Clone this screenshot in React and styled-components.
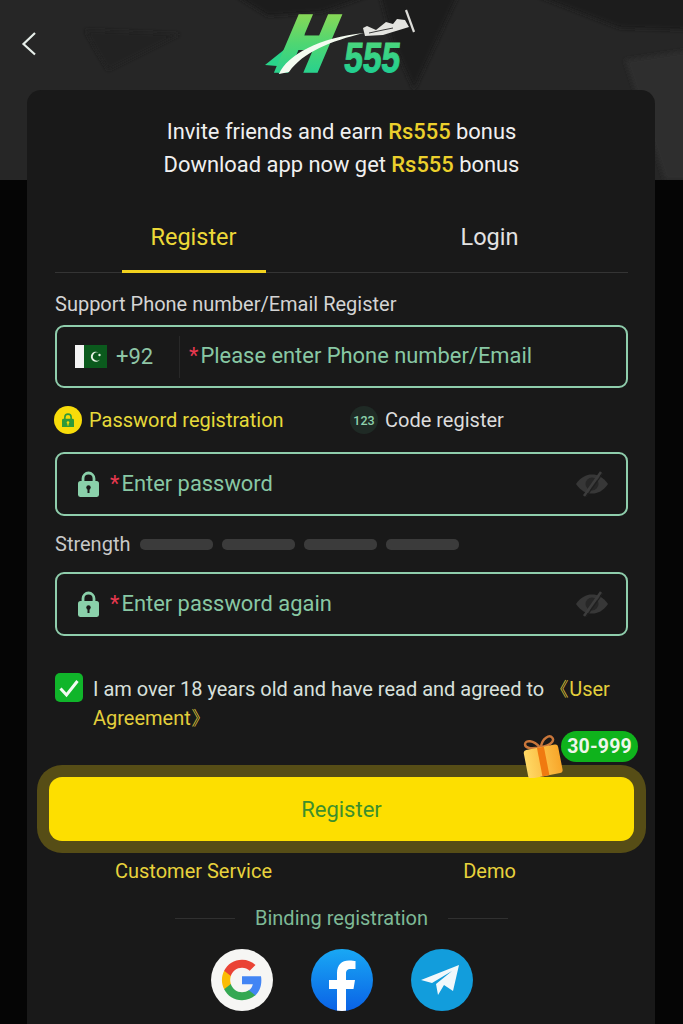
import React from "react";
import styled, { createGlobalStyle } from "styled-components";

const Global = createGlobalStyle`
  html, body { margin: 0; padding: 0; background: #050505; }
  * { box-sizing: border-box; }
`;

const Page = styled.div`
  position: relative;
  width: 683px;
  height: 1024px;
  overflow: hidden;
  background: #050505;
  font-family: Roboto, "Liberation Sans", sans-serif;
  color: #e8e8e8;
`;

const Backdrop = styled.svg`
  position: absolute;
  top: 0;
  left: 0;
  width: 683px;
  height: 180px;
`;

const Header = styled.header`
  position: relative;
  height: 90px;
  display: grid;
  grid-template-columns: 1fr auto 1fr;
  align-items: start;
  padding: 10px 24px 0 20px;
`;

const BackButton = styled.button`
  width: 20px;
  height: 28px;
  margin-top: 20px;
  padding: 0;
  border: 0;
  background: none;
  display: flex;
`;

const Card = styled.main`
  position: relative;
  width: 628px;
  height: 934px;
  margin-left: 27px;
  padding: 25px 27px 0 28px;
  background: #191919;
  border-radius: 14px 14px 0 0;
`;

const Promo = styled.p`
  margin: 0;
  font-size: 21.9px;
  line-height: 33px;
  text-align: center;
  color: #f0f0f0;
`;

const Amount = styled.b`
  font-weight: 500;
  color: #ecd02c;
`;

const TwoColumns = styled.div`
  display: grid;
  grid-template-columns: 144px 144px;
  column-gap: 152px;
  justify-content: center;
`;

const Tabs = styled(TwoColumns)`
  height: 63px;
  margin-top: 29px;
  box-shadow: inset 0 -1px 0 #343434;
`;

const Tab = styled.div`
  display: flex;
  align-items: center;
  justify-content: center;
  padding-bottom: 7px;
  font-size: 23.5px;
  color: ${(p) => (p.$active ? "#ecd838" : "#e2e2e2")};
  border-bottom: 3px solid ${(p) => (p.$active ? "#f2d21e" : "transparent")};
`;

const FieldLabel = styled.div`
  height: 24px;
  margin-top: 19px;
  font-size: 20px;
  line-height: 24px;
  color: #d4d4d4;
`;

const Field = styled.div`
  height: ${(p) => p.$height}px;
  margin-top: ${(p) => p.$top}px;
  display: flex;
  align-items: center;
  padding: 0 17px 0 ${(p) => p.$left}px;
  border: 2px solid #8fcdac;
  border-radius: 9px;
`;

const Flag = styled.svg`
  width: 32px;
  height: 23px;
  flex: none;
`;

const Dial = styled.span`
  width: 64px;
  height: 42px;
  margin-left: 9px;
  display: flex;
  align-items: center;
  font-size: 22px;
  color: #8fc6a6;
  border-right: 1px solid #282828;
`;

const Placeholder = styled.span`
  margin-left: ${(p) => p.$gap}px;
  margin-bottom: 2px;
  font-size: 21.9px;
  color: #88c8a4;
  white-space: nowrap;
`;

const Star = styled.i`
  font-style: normal;
  padding-right: 2px;
  color: #e8384f;
`;

const EyeIcon = styled.svg`
  width: 34px;
  height: 28px;
  margin-left: auto;
  flex: none;
`;

const Methods = styled.div`
  height: 28px;
  margin-top: 18px;
  margin-left: -1px;
  display: grid;
  grid-template-columns: 296px auto;
`;

const Method = styled.div`
  display: flex;
  align-items: center;
  gap: 7px;
  font-size: 20px;
  color: ${(p) => (p.$active ? "#e6da3a" : "#dcdcdc")};
`;

const MethodBadge = styled.span`
  width: 28px;
  height: 28px;
  display: flex;
  align-items: center;
  justify-content: center;
  border-radius: 50%;
  font-size: 12.5px;
  font-weight: 500;
  color: #8fd2ad;
  background: ${(p) => (p.$active ? "#f8dc0a" : "#1f2a25")};
`;

const Strength = styled.div`
  height: 22px;
  margin-top: 17px;
  display: flex;
  align-items: center;
  font-size: 20px;
  color: #c8c8c8;
`;

const StrengthBars = styled.div`
  display: flex;
  gap: 9.5px;
  margin-left: 10px;
`;

const StrengthBar = styled.span`
  width: 72.5px;
  height: 11px;
  border-radius: 5px;
  background: #3b3b3b;
`;

const Agreement = styled.div`
  margin-top: 37px;
  display: flex;
  gap: 10px;
`;

const CheckBox = styled.span`
  width: 28px;
  height: 29px;
  flex: none;
  display: flex;
  align-items: center;
  justify-content: center;
  border-radius: 5px;
  background: #10b52a;
`;

const AgreementText = styled.p`
  margin: 2px 0 0;
  font-size: 20px;
  line-height: 29px;
  color: #d8e0dc;
`;

const AgreementLink = styled.span`
  color: #e3cf3c;
`;

const SubmitWrap = styled.div`
  position: relative;
  margin: 44px 0 0 -6px;
  width: 585px;
`;

const SubmitButton = styled.button`
  display: block;
  width: 100%;
  height: 64px;
  border: 0;
  border-radius: 13px;
  background: #fddf00;
  box-shadow: 0 0 0 12px #564d16;
  font-family: inherit;
  font-size: 22px;
  color: #3d8f2c;
`;

const Reward = styled.div`
  position: absolute;
  top: -46px;
  right: -4px;
  height: 31px;
  padding: 0 6px;
  display: flex;
  align-items: center;
  border-radius: 16px;
  background: #0fb31c;
  font-size: 19.5px;
  font-weight: 700;
  letter-spacing: 0.2px;
  color: #eef6ea;
`;

const GiftIcon = styled.svg`
  position: absolute;
  top: -43px;
  right: 69px;
  width: 44px;
  height: 44px;
`;

const Links = styled(TwoColumns)`
  margin-top: 18px;
  height: 24px;
  align-items: center;
`;

const LinkText = styled.a`
  justify-self: center;
  white-space: nowrap;
  font-size: 20px;
  color: #e8d23c;
`;

const Divider = styled.div`
  height: 24px;
  margin-top: 23px;
  display: flex;
  align-items: center;
  justify-content: center;
  gap: 20px;
  font-size: 20px;
  color: #7eb996;
  &::before,
  &::after {
    content: "";
    width: 60px;
    height: 1px;
    background: #303030;
  }
`;

const Socials = styled.div`
  margin-top: 19px;
  display: flex;
  justify-content: center;
  gap: 38px;
`;

const SocialIcon = styled.svg`
  width: 62px;
  height: 62px;
  flex: none;
`;

const LockGlyph = ({ size = 21, color = "#8ad0aa", hole = "#191919" }) => (
  <svg width={size} height={size * 1.24} viewBox="0 0 21 26" style={{ flex: "none" }}>
    <path d="M5 11V7.500a5.500 5.500 0 0 1 11 0V11" fill="none" stroke={color} strokeWidth="2.800" />
    <rect x="0" y="10" width="21" height="16" rx="2.500" fill={color} />
    <circle cx="10.500" cy="16.500" r="2.200" fill={hole} />
    <rect x="9.500" y="17" width="2" height="5" fill={hole} />
  </svg>
);

const HiddenEye = () => (
  <EyeIcon viewBox="0 0 34 28">
    <path
      fill="#373737"
      d="M1 14C6 7 11 4.500 17 4.500S28 7 33 14c-5 7-10 9.500-16 9.500S6 21 1 14Z"
    />
    <circle cx="17" cy="14" r="6.500" fill="#272727" />
    <path d="M9 26 26 2" stroke="#3c3c3c" strokeWidth="2.600" />
    <path d="M11 27 28 3" stroke="#1f1f1f" strokeWidth="1.200" />
  </EyeIcon>
);

const Logo = () => (
  <svg width="150" height="66" viewBox="0 0 150 66" overflow="visible">
    <defs>
      <linearGradient id="logoGreen" x1="0" y1="0" x2="0" y2="1">
        <stop offset="0" stopColor="#a2d94a" />
        <stop offset="0.5" stopColor="#4fd672" />
        <stop offset="1" stopColor="#17cf9a" />
      </linearGradient>
      <linearGradient id="digitGreen" x1="0" y1="0" x2="0" y2="1">
        <stop offset="0" stopColor="#55d877" />
        <stop offset="1" stopColor="#16cc96" />
      </linearGradient>
    </defs>
    <path d="M0 55 20 39 40 24 26 58 14 64 12 56Z" fill="#2ad48a" />
    <text
      x="0"
      y="0"
      transform="translate(8 60) skewX(-23) scale(.86 1)"
      fontFamily="'Liberation Sans', sans-serif"
      fontWeight="700"
      fontSize="77"
      fill="url(#logoGreen)"
      stroke="url(#logoGreen)"
      strokeWidth="5.500"
    >
      H
    </text>
    <text
      x="0"
      y="0"
      transform="translate(78 62) skewX(-6) scale(.8 1)"
      fontFamily="'Liberation Sans', sans-serif"
      fontWeight="700"
      fontSize="42"
      fill="url(#digitGreen)"
      stroke="url(#digitGreen)"
      strokeWidth="1"
    >
      555
    </text>
    <path d="M14 64C22 45 55 27 99 23 66 31 38 42 24 62Z" fill="#f4fbf0" />
    <path
      d="M98 18 100 26 118 25 131 21 144 17 140 10 132 9 128 14 121 12 111 20 102 16Z"
      fill="#e4e4e0"
    />
    <path d="M104 23 118 20 128 18" stroke="#3a3a3a" strokeWidth="1" fill="none" />
    <path d="M141 0 149 22" stroke="#dcdcd8" strokeWidth="2.200" />
  </svg>
);

export default function App() {
  return (
    <Page>
      <Global />
      <Backdrop viewBox="0 0 683 180" preserveAspectRatio="none">
        <defs>
          <filter id="softEdge">
            <feGaussianBlur stdDeviation="2" />
          </filter>
        </defs>
        <rect width="683" height="180" fill="#262626" />
        <g filter="url(#softEdge)">
          <path d="M235 -5 268 16 322 12 370 -5Z" fill="#1c1c1c" />
          <path d="M85 30 180 34 108 70 96 50Z" fill="#202020" />
          <path d="M380 -5 458 -5 414 90 392 40Z" fill="#1e1e1e" />
          <path d="M535 -5 690 -5 690 30 620 28Z" fill="#1f1f1f" />
          <path d="M625 60 690 50 690 180 665 180Z" fill="#2d2d2d" />
        </g>
      </Backdrop>
      <Header>
        <BackButton aria-label="Back">
          <svg width="20" height="28" viewBox="0 0 20 28" fill="none">
            <path d="M15 3 3.500 14 15 24.500" stroke="#e6eee9" strokeWidth="2.200" />
          </svg>
        </BackButton>
        <Logo />
      </Header>
      <Card>
        <Promo>
          Invite friends and earn <Amount>Rs555</Amount> bonus
          <br />
          Download app now get <Amount>Rs555</Amount> bonus
        </Promo>
        <Tabs>
          <Tab $active>Register</Tab>
          <Tab>Login</Tab>
        </Tabs>
        <FieldLabel>Support Phone number/Email Register</FieldLabel>
        <Field $height={63} $top={9} $left={18}>
          <Flag viewBox="0 0 32 23">
            <rect width="32" height="23" fill="#0b5a1d" />
            <rect width="9" height="23" fill="#f4f4f4" />
            <path d="M23.500 7.500a5 5 0 1 0 1.500 7 4.200 4.200 0 1 1-1.500-7Z" fill="#e8f3e6" />
            <circle cx="24.500" cy="10" r="1.200" fill="#e8f3e6" />
          </Flag>
          <Dial>+92</Dial>
          <Placeholder $gap={9}>
            <Star>*</Star>Please enter Phone number/Email
          </Placeholder>
        </Field>
        <Methods>
          <Method $active>
            <MethodBadge $active>
              <LockGlyph size={12} color="#2f9a3a" hole="#f8dc0a" />
            </MethodBadge>
            Password registration
          </Method>
          <Method>
            <MethodBadge>123</MethodBadge>
            Code register
          </Method>
        </Methods>
        <Field $height={64} $top={18} $left={21}>
          <LockGlyph />
          <Placeholder $gap={11}>
            <Star>*</Star>Enter password
          </Placeholder>
          <HiddenEye />
        </Field>
        <Strength>
          Strength
          <StrengthBars>
            <StrengthBar />
            <StrengthBar />
            <StrengthBar />
            <StrengthBar />
          </StrengthBars>
        </Strength>
        <Field $height={64} $top={17} $left={21}>
          <LockGlyph />
          <Placeholder $gap={11}>
            <Star>*</Star>Enter password again
          </Placeholder>
          <HiddenEye />
        </Field>
        <Agreement>
          <CheckBox>
            <svg width="22" height="20" viewBox="0 0 22 20" fill="none">
              <path d="M2.500 10.500 8.500 17 19.500 3" stroke="#f2fbf2" strokeWidth="3" />
            </svg>
          </CheckBox>
          <AgreementText>
            I am over 18 years old and have read and agreed to{" "}
            <AgreementLink>《User Agreement》</AgreementLink>
          </AgreementText>
        </Agreement>
        <SubmitWrap>
          <SubmitButton>Register</SubmitButton>
          <Reward>30-999</Reward>
          <GiftIcon viewBox="0 0 44 44">
            <defs>
              <linearGradient id="giftBox" x1="0" y1="0" x2="1" y2="0">
                <stop offset="0" stopColor="#ffd964" />
                <stop offset="1" stopColor="#f8a62a" />
              </linearGradient>
            </defs>
            <g transform="rotate(-11 22 24)">
              <path d="M21 13C16 4 8 3 7 7s5 6 14 6ZM22 13c3-9 11-11 13-7s-4 7-13 7Z" fill="none" stroke="#c9763a" strokeWidth="2.400" />
              <rect x="4" y="13" width="35" height="29" rx="3" fill="url(#giftBox)" />
              <rect x="18" y="13" width="7" height="29" fill="#f07a10" />
            </g>
          </GiftIcon>
        </SubmitWrap>
        <Links>
          <LinkText>Customer Service</LinkText>
          <LinkText>Demo</LinkText>
        </Links>
        <Divider>Binding registration</Divider>
        <Socials>
          <SocialIcon viewBox="0 0 62 62">
            <circle cx="31" cy="31" r="31" fill="#f6f6f4" />
            <g transform="translate(9 9) scale(.917)">
              <path fill="#4285F4" d="M45.100 24.500c0-1.600-.1-3.100-.4-4.500H24v8.600h11.800c-.5 2.800-2.100 5.100-4.400 6.700v5.500h7.100c4.200-3.800 6.600-9.500 6.600-16.300Z" />
              <path fill="#34A853" d="M24 46c5.900 0 10.900-2 14.500-5.300l-7.100-5.500c-2 1.300-4.500 2.100-7.400 2.100-5.700 0-10.500-3.800-12.200-9H4.500v5.700C8.100 41.200 15.500 46 24 46Z" />
              <path fill="#FBBC05" d="M11.800 28.300c-.4-1.300-.7-2.800-.7-4.300s.3-3 .7-4.300V14H4.500C3 17 2.100 20.400 2.100 24s.9 7 2.400 10l7.300-5.700Z" />
              <path fill="#EA4335" d="M24 10.700c3.200 0 6.100 1.100 8.400 3.300l6.300-6.300C34.900 4.200 29.900 2 24 2 15.500 2 8.100 6.800 4.500 14l7.300 5.700c1.700-5.200 6.500-9 12.200-9Z" />
            </g>
          </SocialIcon>
          <SocialIcon viewBox="0 0 62 62">
            <defs>
              <linearGradient id="fbBlue" x1="0" y1="0" x2="0" y2="1">
                <stop offset="0" stopColor="#19a8f4" />
                <stop offset="1" stopColor="#0a62e6" />
              </linearGradient>
              <clipPath id="fbDisc">
                <circle cx="31" cy="31" r="31" />
              </clipPath>
            </defs>
            <circle cx="31" cy="31" r="31" fill="url(#fbBlue)" />
            <path
              clipPath="url(#fbDisc)"
              d="M26 62V40h-8v-9h8v-7c0-8 4.700-12.500 12-12.500 3 0 5.500.4 6.500.6v8h-4.500c-4 0-5 2-5 4.800V31h9l-1.500 9H35v22Z"
              fill="#fff"
            />
          </SocialIcon>
          <SocialIcon viewBox="0 0 62 62">
            <circle cx="31" cy="31" r="31" fill="#129ddc" />
            <path d="M10 31 48 16 42 42 33 36 27 46 25 35 41 22 21 34Z" fill="#f2f8fb" />
          </SocialIcon>
        </Socials>
      </Card>
    </Page>
  );
}
